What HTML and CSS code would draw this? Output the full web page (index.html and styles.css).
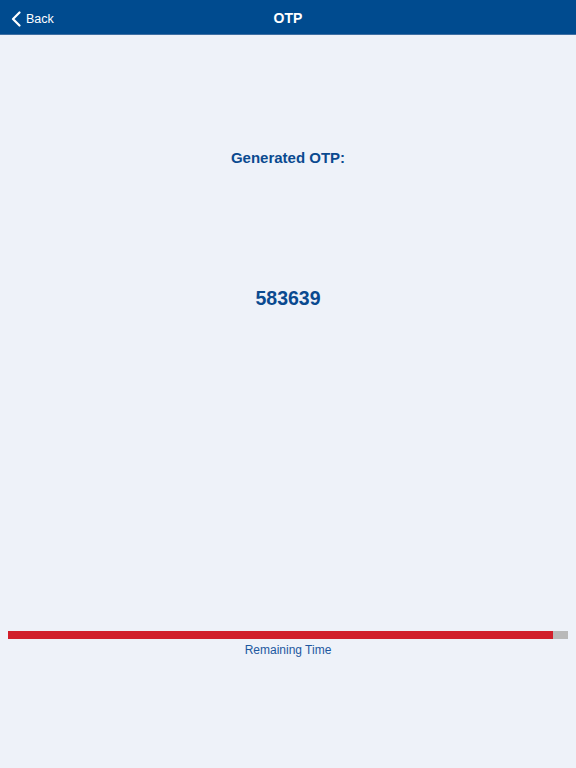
FILE: index.html
```html
<!DOCTYPE html>
<html>
<head>
<meta charset="utf-8">
<link rel="stylesheet" href="styles.css">
</head>
<body>
<header class="navbar">
  <div class="back">
    <svg class="chev" width="10" height="16" viewBox="0 0 10 16"><path d="M8.5 1.5 L2 8 L8.5 14.5" fill="none" stroke="#fff" stroke-width="2.2" stroke-linecap="round" stroke-linejoin="round"/></svg>
    <span>Back</span>
  </div>
  <div class="title">OTP</div>
</header>
<main class="content">
  <div class="label">Generated OTP:</div>
  <div class="code">583639</div>
  <div class="spacer"></div>
  <div class="progress"><div class="fill" style="width:97.3%"></div></div>
  <div class="remaining">Remaining Time</div>
</main>
</body>
</html>
```
FILE: styles.css
```css
html, body {
  margin: 0;
  padding: 0;
}
body {
  width: 576px;
  height: 768px;
  background: #eef2f9;
  font-family: "Liberation Sans", Arial, sans-serif;
  display: flex;
  flex-direction: column;
}
.navbar {
  height: 35px;
  background: #004b8f;
  border-bottom: 1px solid #3f6fa3;
  box-sizing: border-box;
  position: relative;
  display: flex;
  align-items: center;
  justify-content: center;
  flex-shrink: 0;
}
.back {
  position: absolute;
  left: 11px;
  top: 1px;
  height: 35px;
  display: flex;
  align-items: center;
  gap: 5px;
  color: #fff;
  font-size: 12.5px;
}
.chev {
  display: block;
}
.title {
  color: #fff;
  font-weight: bold;
  font-size: 14px;
  margin-top: 2px;
}
.content {
  flex: 1;
  display: flex;
  flex-direction: column;
  align-items: center;
  padding: 0 8px;
}
.label {
  margin-top: 113px;
  color: #0a4a90;
  font-weight: bold;
  font-size: 15px;
  line-height: 20px;
}
.code {
  margin-top: 118px;
  color: #0a4a90;
  font-weight: bold;
  font-size: 19.5px;
  line-height: 24px;
}
.spacer {
  height: 321px;
}
.progress {
  width: 560px;
  height: 8px;
  background: #b9b9b9;
  display: flex;
}
.fill {
  background: #d11f2b;
  height: 100%;
}
.remaining {
  margin-top: 3px;
  color: #1d58a0;
  font-size: 12px;
  line-height: 16px;
}
```
